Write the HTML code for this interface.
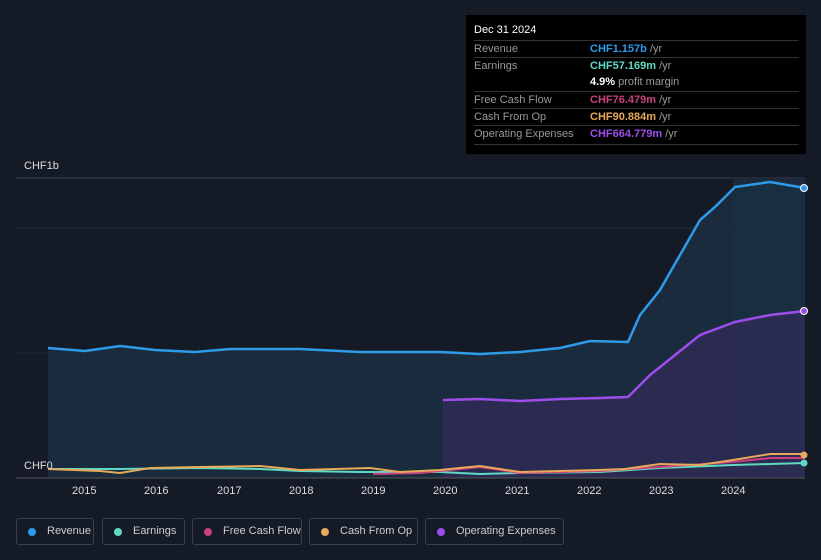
<!DOCTYPE html>
<html><head><style>
body{margin:0;width:821px;height:560px;background:#151b26;font-family:"Liberation Sans",sans-serif;overflow:hidden;position:relative}
.tip{position:absolute;left:466px;top:15px;width:340px;height:139px;background:#000;color:#fff;font-size:11px}
.row{position:absolute;left:8px;width:325px;border-top:1px solid #333;height:17px;line-height:17px}
.row span.l{color:#999;display:inline-block;width:116px}
.lg{position:absolute;top:518px;height:27px;border:1px solid #3a3f4a;border-radius:3px;color:#ccc;font-size:11px;line-height:25px;box-sizing:border-box;padding-left:30px}
.lg i{position:absolute;left:11px;top:9px;width:8px;height:8px;border-radius:50%}
.ax{position:absolute;top:485px;color:#ddd;font-size:11px}
</style></head><body>
<svg width="821" height="560" style="position:absolute;left:0;top:0">
<line x1="16" y1="178" x2="805" y2="178" stroke="#3a404a"/>
<line x1="16" y1="228" x2="805" y2="228" stroke="#252b36"/>
<line x1="16" y1="353" x2="805" y2="353" stroke="#252b36"/>
<rect x="733" y="178" width="72" height="300" fill="#1d2a3d"/>
<path d="M48,348 L85,351 L120,346 L155,350 L195,352 L230,349 L300,349 L360,352 L440,352 L480,354 L520,352 L560,348 L590,341 L628,342 L640,315 L660,290 L700,220 L715,207 L735,187 L770,182 L805,188 L805,478 L48,478Z" fill="#1a3042" fill-opacity=".8"/>
<path d="M443,400 L480,399 L520,401 L560,399 L600,398 L628,397 L650,375 L700,335 L735,322 L770,315 L805,311 L805,478 L443,478Z" fill="#2f2c55" fill-opacity=".85"/>
<path d="M48,348 L85,351 L120,346 L155,350 L195,352 L230,349 L300,349 L360,352 L440,352 L480,354 L520,352 L560,348 L590,341 L628,342 L640,315 L660,290 L700,220 L715,207 L735,187 L770,182 L805,188" fill="none" stroke="#2d9be8" stroke-width="2.5"/>
<path d="M443,400 L480,399 L520,401 L560,399 L600,398 L628,397 L650,375 L700,335 L735,322 L770,315 L805,311" fill="none" stroke="#9d4eea" stroke-width="2.5"/>
<path d="M48,469 L120,469 L200,468 L260,469 L300,471 L360,472 L440,472 L480,474 L520,473 L600,472 L660,468 L733,465 L805,463" fill="none" stroke="#5fd9c2" stroke-width="2"/>
<path d="M373,474 L420,473 L480,467 L520,473 L600,471 L660,467 L733,462 L770,458 L805,458" fill="none" stroke="#c8417e" stroke-width="2"/>
<path d="M48,469 L100,471 L120,473 L150,468 L200,467 L260,466 L300,470 L370,468 L400,472 L440,470 L480,466 L520,472 L600,470 L625,469 L660,464 L700,465 L733,460 L770,454 L805,454" fill="none" stroke="#e8a95a" stroke-width="2"/>
<line x1="16" y1="478" x2="805" y2="478" stroke="#555"/>
<circle cx="804" cy="188" r="3.5" fill="#2d9be8" stroke="#fff" stroke-width="1"/>
<circle cx="804" cy="311" r="3.5" fill="#9d4eea" stroke="#fff" stroke-width="1"/>
<circle cx="804" cy="455" r="3.5" fill="#e8a95a"/>
<circle cx="804" cy="463" r="3.5" fill="#5fd9c2"/>
</svg>
<div style="position:absolute;left:24px;top:160px;color:#ddd;font-size:11px">CHF1b</div>
<div style="position:absolute;left:24px;top:460px;color:#ddd;font-size:11px">CHF0</div>
<div class="ax" style="left:72px">2015</div><div class="ax" style="left:144px">2016</div><div class="ax" style="left:217px">2017</div><div class="ax" style="left:289px">2018</div><div class="ax" style="left:361px">2019</div><div class="ax" style="left:433px">2020</div><div class="ax" style="left:505px">2021</div><div class="ax" style="left:577px">2022</div><div class="ax" style="left:649px">2023</div><div class="ax" style="left:721px">2024</div>
<div class="tip">
<div style="position:absolute;left:8px;top:9px">Dec 31 2024</div>
<div class="row" style="top:25px"><span class="l">Revenue</span><span style="color:#2d9be8;font-weight:bold">CHF1.157b</span> <span style="color:#999">/yr</span></div>
<div class="row" style="top:42px"><span class="l">Earnings</span><span style="color:#5fd9c2;font-weight:bold">CHF57.169m</span> <span style="color:#999">/yr</span></div>
<div class="row" style="top:59px;border:0"><span class="l"></span><b>4.9%</b> <span style="color:#999">profit margin</span></div>
<div class="row" style="top:76px"><span class="l">Free Cash Flow</span><span style="color:#c8417e;font-weight:bold">CHF76.479m</span> <span style="color:#999">/yr</span></div>
<div class="row" style="top:93px"><span class="l">Cash From Op</span><span style="color:#e8a95a;font-weight:bold">CHF90.884m</span> <span style="color:#999">/yr</span></div>
<div class="row" style="top:110px"><span class="l">Operating Expenses</span><span style="color:#9d4eea;font-weight:bold">CHF664.779m</span> <span style="color:#999">/yr</span></div>
<div class="row" style="top:129px;height:0"></div>
</div>
<div class="lg" style="left:16px;width:78px"><i style="background:#2d9be8"></i>Revenue</div>
<div class="lg" style="left:102px;width:83px"><i style="background:#5fd9c2"></i>Earnings</div>
<div class="lg" style="left:192px;width:110px"><i style="background:#c8417e"></i>Free Cash Flow</div>
<div class="lg" style="left:309px;width:109px"><i style="background:#e8a95a"></i>Cash From Op</div>
<div class="lg" style="left:425px;width:139px"><i style="background:#9d4eea"></i>Operating Expenses</div>
</body></html>
